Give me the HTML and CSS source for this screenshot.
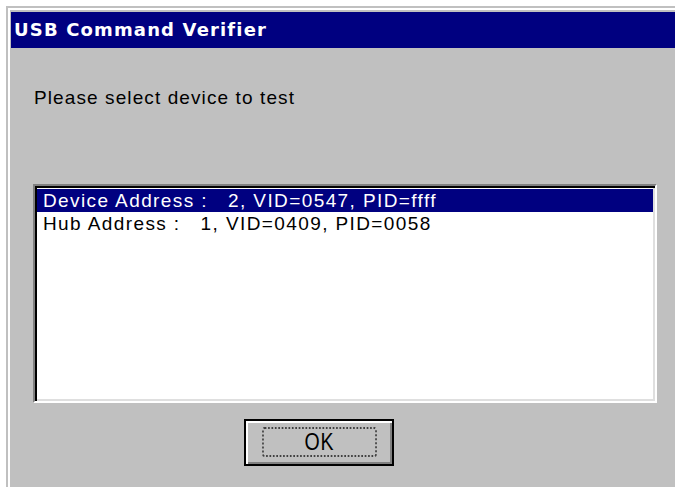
FILE: index.html
```html
<!DOCTYPE html>
<html lang="en">
<head>
<meta charset="utf-8">
<title>USB Command Verifier</title>
<link rel="stylesheet" href="styles.css">
</head>
<body>
  <div class="window">
    <div class="frame">
      <div class="caption">USB Command Verifier</div>
      <div class="client">
        <p class="prompt">Please select device to test</p>
        <ul class="listbox">
          <li class="item selected">Device Address :   2, VID=0547, PID=ffff</li>
          <li class="item">Hub Address :   1, VID=0409, PID=0058</li>
        </ul>
        <div class="actions">
          <button class="btn default" type="button"><span class="focus">OK</span></button>
        </div>
      </div>
    </div>
  </div>
</body>
</html>
```

FILE: styles.css
```css
html, body {
  margin: 0;
  padding: 0;
  background: #ffffff;
  overflow: hidden;
}

body {
  width: 675px;
  height: 487px;
}

/* outer window edge: grey line, then white highlight */
.window {
  margin: 6px 0 0 6px;
  height: 481px;
  border-top: 2px solid #c0c0c0;
  border-left: 2px solid #c0c0c0;
  background: #c0c0c0;
  box-sizing: border-box;
}

.frame {
  height: 100%;
  border-top: 2px solid #ffffff;
  border-left: 2px solid #ffffff;
  padding: 2px 0 0 1px;
  box-sizing: border-box;
  display: flex;
  flex-direction: column;
}

.caption {
  height: 36px;
  background: #000080;
  color: #ffffff;
  font-family: "DejaVu Sans", Verdana, sans-serif;
  font-weight: bold;
  font-size: 18px;
  letter-spacing: 1.15px;
  line-height: 36px;
  padding-left: 3px;
  white-space: nowrap;
}

.client {
  flex: 1;
  background: #c0c0c0;
  padding: 0 0 0 22px;
  display: flex;
  flex-direction: column;
  font-family: "Liberation Sans", Arial, sans-serif;
  font-size: 19px;
  color: #000000;
}

.prompt {
  margin: 39px 0 0 1px;
  line-height: 22px;
  letter-spacing: 1.1px;
  white-space: nowrap;
}

/* sunken list box */
.listbox {
  list-style: none;
  margin: 75px 0 0 0;
  padding: 0;
  width: 624px;
  height: 219px;
  box-sizing: border-box;
  background: #ffffff;
  border-style: solid;
  border-width: 2px;
  border-color: #808080 #ffffff #ffffff #808080;
  box-shadow: inset 2px 2px 0 #000000, inset -2px -2px 0 #dfdfdf;
  padding: 3px 2px 2px 2px;
}

.item {
  height: 23px;
  line-height: 23px;
  padding-left: 6px;
  letter-spacing: 1.4px;
  white-space: pre;
}

.item.selected {
  background: #000080;
  color: #ffffff;
}

.actions {
  display: flex;
  padding-left: 211px;
  margin-top: 16px;
}

/* default push button with heavy black outline */
.btn {
  width: 150px;
  height: 47px;
  padding: 6px 5px 7px 6px;
  box-sizing: border-box;
  background: #c0c0c0;
  border: 2px solid #000000;
  box-shadow: inset 2px 2px 0 #ffffff, inset -2px -2px 0 #808080;
  display: flex;
}

.focus {
  flex: 1;
  border: 2px dotted #404040;
  border-radius: 3px;
  display: flex;
  align-items: center;
  justify-content: center;
  font-family: "Liberation Sans", Arial, sans-serif;
  font-size: 23px;
  color: #000000;
  transform: scaleX(0.85);
  letter-spacing: 1px;
}
```
